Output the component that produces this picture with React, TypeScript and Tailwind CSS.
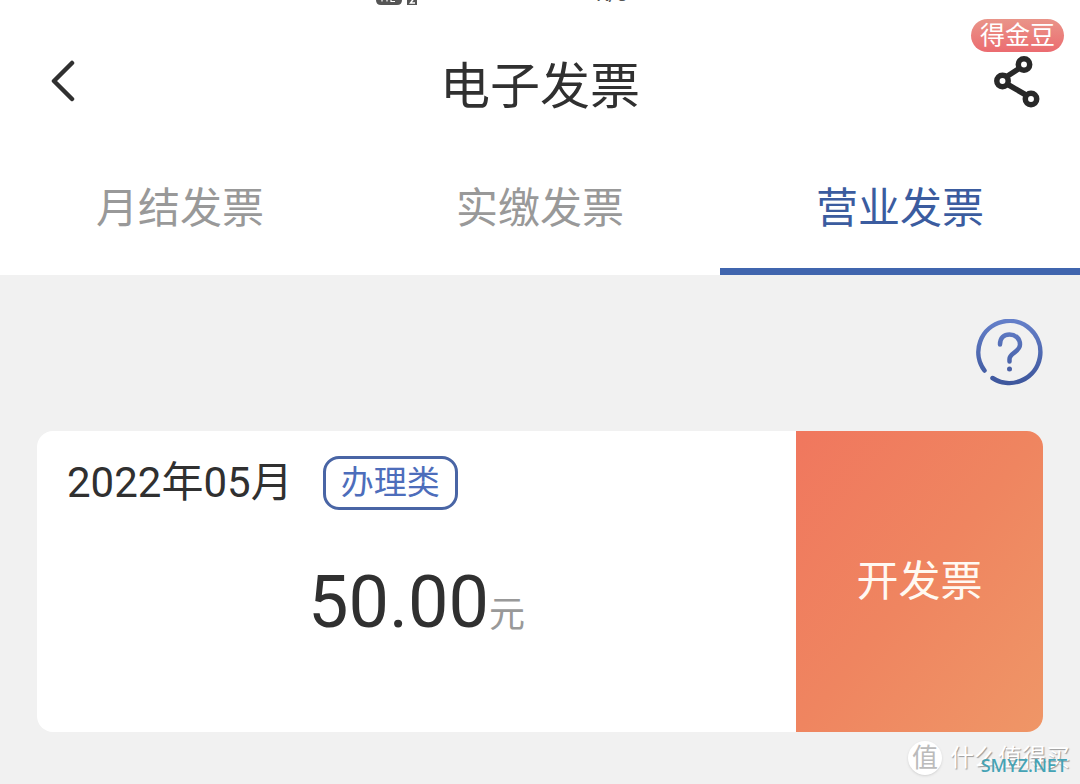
import clsx from "clsx";

function StatusBar() {
  return (
    <div className="flex h-2 items-start overflow-hidden bg-white text-[#555]">
      <svg className="ml-[376px] h-2 w-11 shrink-0" viewBox="0 0 44 8" aria-hidden="true">
        <path d="M0 -14H26V0Q26 5 21 5H5Q0 5 0 0Z" fill="currentColor" />
        <path d="M6 0V1.500M11 0V1.500M15 0V1.500H19" stroke="#fff" strokeWidth="1.200" fill="none" />
        <path d="M31 -4H41V5H31Z" fill="currentColor" />
        <path d="M37.500 -1L34.500 3H39" stroke="#fff" strokeWidth="1.500" fill="none" />
      </svg>
      <div className="ml-44 flex h-2 flex-col justify-end">
        <span className="pb-1 text-xl leading-5">K/s</span>
      </div>
    </div>
  );
}

function BackIcon() {
  return (
    <svg width="26" height="42" viewBox="0 0 26 42" fill="none" aria-hidden="true">
      <path d="M22 3L4 21L22 39" stroke="#303030" strokeWidth="4.5" strokeLinecap="round" strokeLinejoin="round" />
    </svg>
  );
}

function ShareIcon() {
  return (
    <svg width="46" height="52" viewBox="0 0 46 52" fill="none" stroke="#282828" aria-hidden="true">
      <path d="M12 21L26 12M13 28L32 39" strokeWidth="5.5" />
      <circle cx="30" cy="8.500" r="5.700" strokeWidth="5.5" />
      <circle cx="8.500" cy="25" r="5.700" strokeWidth="5.5" />
      <circle cx="37" cy="43" r="5.700" strokeWidth="5.5" />
    </svg>
  );
}

function HelpIcon() {
  return (
    <svg width="67" height="67" viewBox="0 0 67 67" fill="none" aria-hidden="true">
      <defs>
        <linearGradient id="help" x1="0" y1="0" x2="0" y2="67" gradientUnits="userSpaceOnUse">
          <stop offset="0" stopColor="#6580ca" />
          <stop offset="1" stopColor="#3c559b" />
        </linearGradient>
      </defs>
      <g stroke="url(#help)" strokeLinecap="round">
        <path d="M8.500 51.500A31 31 0 1 1 16.500 59" strokeWidth="4.500" />
        <path d="M24 25.500C24 18.500 28 15.500 33.500 15.500C39.500 15.500 44 19.500 44 25.500C44 33 33.500 34 33.500 40V42.500" strokeWidth="4.500" />
      </g>
      <circle cx="33.500" cy="50" r="2.500" fill="#4a60a4" />
    </svg>
  );
}

const tabs = [
  { label: "月结发票", active: false },
  { label: "实缴发票", active: false },
  { label: "营业发票", active: true },
];

export default function App() {
  return (
    <div className="relative min-h-screen bg-[#f1f1f1] font-[Roboto,'Noto_Sans_CJK_SC',sans-serif] text-[#303030]">
      <StatusBar />

      <header className="grid h-[134px] grid-cols-[1fr_auto_1fr] items-start bg-white pt-12">
        <button aria-label="返回" className="mt-1 ml-[50px] w-fit">
          <BackIcon />
        </button>
        <h1 className="text-[50px] leading-[62px]">电子发票</h1>
        <div className="relative mr-10 justify-self-end">
          <button aria-label="分享" className="block">
            <ShareIcon />
          </button>
          <span className="absolute -right-6 bottom-full mb-1 rounded-full bg-linear-to-b from-[#e99489] to-[#eb6b70] px-[9px] text-[25px] leading-[33px] whitespace-nowrap text-white">
            得金豆
          </span>
        </div>
      </header>

      <nav className="grid grid-cols-3 bg-white">
        {tabs.map((tab) => (
          <button
            key={tab.label}
            className={clsx(
              "h-[133px] border-b-[7px] pt-2 text-[42px] leading-[60px]",
              tab.active ? "border-[#4065ae] text-[#3b5c9f]" : "border-transparent text-[#999]"
            )}
          >
            {tab.label}
          </button>
        ))}
      </nav>

      <main className="px-[37px] pt-11 pb-12">
        <div className="flex justify-end">
          <button aria-label="帮助">
            <HelpIcon />
          </button>
        </div>

        <section className="mt-[45px] flex min-h-[301px] overflow-hidden rounded-2xl bg-white">
          <div className="flex-1 pt-[22px]">
            <div className="flex items-center gap-[30px] pl-[30px]">
              <h2 className="text-[42px] leading-[60px]">2022年05月</h2>
              <span className="rounded-2xl border-[3px] border-[#4965a5] px-[15px] text-[33px] leading-[48px] text-[#4d6dbb]">
                办理类
              </span>
            </div>
            <p className="mt-[45px] text-center text-[72px] leading-[90px]">
              50.00<span className="text-[36px] text-[#999]">元</span>
            </p>
          </div>
          <button className="w-[247px] bg-linear-to-br from-[#f0775e] via-[#ef8560] to-[#ef9667] text-[42px] text-[#fff9f2]">
            开发票
          </button>
        </section>
      </main>

      <div className="pointer-events-none absolute right-[10px] bottom-2 flex items-center gap-2 text-white">
        <span className="flex size-[34px] items-center justify-center rounded-full bg-white text-[26px] leading-none text-[#bbb] shadow-sm">
          值
        </span>
        <span className="text-[24px] leading-9 [text-shadow:1px_1px_1px_#999]">什么值得买</span>
      </div>
      <span className="pointer-events-none absolute right-[13px] bottom-[7px] font-['Noto_Sans',sans-serif] text-lg leading-6 font-medium text-[#45a3b5]">
        SMYZ.NET
      </span>
    </div>
  );
}
